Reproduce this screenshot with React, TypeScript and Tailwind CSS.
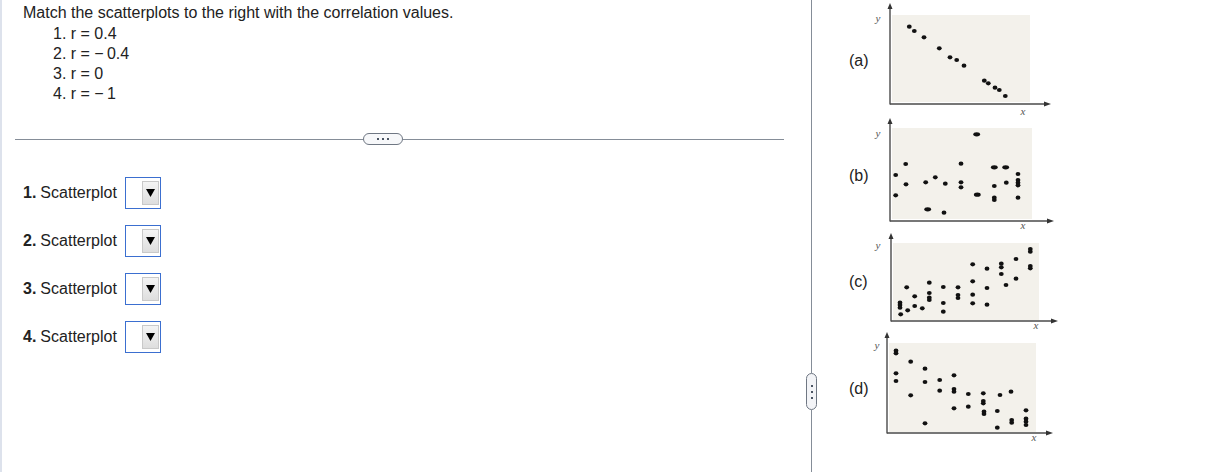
import React from "react";

type Dot = [number, number, number?];

const plotA: Dot[] = [
  [39.3, 26.7], [44.3, 31], [54, 37.3], [69.3, 48.3], [80, 57.3], [86.7, 60], [94, 65.7],
  [114.3, 80.7], [118.3, 83.3], [125, 87.7], [129.3, 90], [135.3, 96],
];

const plotB: Dot[] = [
  [106.7, 19.3, 1], [35.7, 49], [25.7, 60], [36, 69.3], [25.7, 80.3], [55.7, 67.3], [65.3, 62.3],
  [57.7, 94.3, 1], [75.3, 68.7], [74, 97.7], [91, 48.7], [91, 67.3], [91, 72.3], [107.3, 79.7, 1],
  [124.3, 52.3, 1], [135.7, 52.3, 1], [124.3, 71], [124.3, 82.7], [124.3, 85], [136.3, 67.7],
  [148, 59], [148, 65], [148, 67.7], [148, 70.3], [148, 82.7],
];

const plotC: Dot[] = [
  [30, 72.7], [30, 75], [30, 77.7], [30.7, 84.3], [36.7, 57.3], [37.7, 80.3], [44.7, 66.3], [44.7, 76],
  [52.3, 78.3], [59.3, 52.7], [59.3, 63], [59.3, 67.7], [59.3, 70], [73.3, 57], [73.3, 73], [73.3, 81.7],
  [88, 57.3], [88, 65], [88, 68], [102.7, 34.3], [102.7, 51.3], [102.7, 64.7], [102.7, 73.3],
  [117, 38.7], [117, 58], [117, 74.7], [131.3, 33.7], [131.3, 37.3], [131.3, 44], [136, 55],
  [146, 29], [146, 48.7], [160.3, 19], [160.3, 21.7], [160.3, 36], [160.3, 38.3],
];

const plotD: Dot[] = [
  [26, 20.7], [26, 23.3], [40.7, 31.7], [26, 43.3], [26, 51], [40.7, 65.3], [55, 38.7], [55, 52],
  [55, 93.3], [69.7, 50], [69.7, 60.7], [84, 45.3], [84, 59], [84, 61.7], [84, 78.3], [98.3, 64],
  [98.3, 76.7], [113.3, 63.3], [113.3, 71], [113.3, 73.3], [114, 81.7], [114, 84], [127.3, 81],
  [127.3, 97.7], [130, 65], [141, 61.7], [141.7, 90], [141.7, 92.7], [156, 80.3], [156, 88.7],
  [156, 91.7], [156, 95],
];

type PlotSpec = {
  label: string;
  height: number;
  labelTop: string;
  axisX: number;
  axisTop: number;
  axisY: number;
  rect: [number, number, number, number];
  axisEnd: number;
  yLab: [number, number];
  xLab: [number, number];
  dots: Dot[];
};

const plots: PlotSpec[] = [
  { label: "(a)", height: 115, labelTop: "pt-[51px]", axisX: 20, axisTop: 3, axisY: 104, rect: [22, 15, 160, 102], axisEnd: 181, yLab: [8, 22], xLab: [153, 115], dots: plotA },
  { label: "(b)", height: 115, labelTop: "pt-[51px]", axisX: 20, axisTop: 3, axisY: 106, rect: [22, 13, 162, 104], axisEnd: 184, yLab: [8, 22], xLab: [153, 114], dots: plotB },
  { label: "(c)", height: 100, labelTop: "pt-[42px]", axisX: 21, axisTop: 3, axisY: 91, rect: [23, 13, 169, 90], axisEnd: 188, yLab: [8, 19], xLab: [166, 99], dots: plotC },
  { label: "(d)", height: 120, labelTop: "pt-[49px]", axisX: 17, axisTop: 2, axisY: 103, rect: [19, 13, 166, 102], axisEnd: 183, yLab: [7, 19], xLab: [164, 111], dots: plotD },
];

function Plot({ p }: { p: PlotSpec }) {
  const [rx1, ry1, rx2, ry2] = p.rect;
  return (
    <svg width={195} height={p.height} viewBox={`0 0 195 ${p.height}`} className="block overflow-visible">
      <rect x={rx1} y={ry1} width={rx2 - rx1} height={ry2 - ry1} fill="#f3f1eb" />
      <line x1={p.axisX} y1={p.axisTop + 4} x2={p.axisX} y2={p.axisY + 0.5} stroke="#4a4a4a" strokeWidth={1.4} />
      <polygon points={`${p.axisX - 2.5},${p.axisTop + 6} ${p.axisX},${p.axisTop} ${p.axisX + 2.5},${p.axisTop + 6}`} fill="#333" />
      <line x1={p.axisX} y1={p.axisY} x2={p.axisEnd - 5} y2={p.axisY} stroke="#4a4a4a" strokeWidth={1.4} />
      <polygon points={`${p.axisEnd - 7},${p.axisY - 2.5} ${p.axisEnd},${p.axisY} ${p.axisEnd - 7},${p.axisY + 2.5}`} fill="#333" />
      <text x={p.yLab[0]} y={p.yLab[1]} fontSize={11} fontStyle="italic" fontFamily="'Liberation Serif', serif" fill="#555" textAnchor="middle">y</text>
      <text x={p.xLab[0]} y={p.xLab[1]} fontSize={11} fontStyle="italic" fontFamily="'Liberation Serif', serif" fill="#555" textAnchor="middle">x</text>
      {p.dots.map((d, i) => (
        <ellipse key={i} cx={d[0]} cy={d[1]} rx={d[2] ? 3.4 : 2.4} ry={2.1} fill="#111" />
      ))}
    </svg>
  );
}

function Select() {
  return (
    <div className="w-[36px] h-[32px] border border-[#3b6fd0] bg-white flex items-center justify-end pr-px">
      <div className="w-[17px] h-[24px] bg-gradient-to-b from-[#f4f4f4] to-[#dedede] border border-[#c9c9c9] flex items-center justify-center">
        <svg width="9" height="8" viewBox="0 0 9 8">
          <polygon points="0,0 9,0 4.5,8" fill="#000" />
        </svg>
      </div>
    </div>
  );
}

export default function App() {
  const items = [
    "1. r\u00a0=\u00a00.4",
    "2. r\u00a0=\u00a0\u2212\u20090.4",
    "3. r\u00a0=\u00a00",
    "4. r\u00a0=\u00a0\u2212\u20091",
  ];
  return (
    <div className="flex h-[472px] w-[1229px] bg-white text-[#222] font-['Liberation_Sans',Arial,sans-serif] overflow-hidden">
      <div className="w-[806px] shrink-0 border-l-2 border-[#dde2ec] flex flex-col">
        <div className="pl-[21px] pt-[3px] text-[16px] leading-[20px]">
          <div>Match the scatterplots to the right with the correlation values.</div>
          <div className="pl-[30px] mt-px">
            {items.map((t) => (
              <div key={t}>{t}</div>
            ))}
          </div>
        </div>
        <div className="mt-[29px] ml-[13px] w-[769px] flex items-center h-[12px]">
          <div className="flex-1 h-px bg-[#858d98]" />
          <div className="w-[40px] h-[12px] rounded-full border border-[#6f7783] bg-[#f7f8fa] flex items-center justify-center gap-[3px]">
            <span className="w-[2px] h-[2px] bg-[#4b5563]" />
            <span className="w-[2px] h-[2px] bg-[#4b5563]" />
            <span className="w-[2px] h-[2px] bg-[#4b5563]" />
          </div>
          <div className="w-[381px] h-px bg-[#858d98]" />
        </div>
        <div className="mt-[32px] pl-[21px] flex flex-col gap-4 text-[16px]">
          {[1, 2, 3, 4].map((n) => (
            <div key={n} className="flex items-center h-[32px]">
              <span className="font-bold">{n}.</span>
              <span className="ml-[4px] w-[85px]">Scatterplot</span>
              <Select />
            </div>
          ))}
        </div>
      </div>
      <div className="w-[11px] shrink-0 flex flex-col items-center">
        <div className="w-px h-[373px] bg-[#858d98]" />
        <div className="w-[11px] h-[37px] rounded-full border border-[#6f7783] bg-[#f3f4f7] flex flex-col items-center justify-center gap-[4px]">
          <span className="w-[2px] h-[2px] bg-[#4b5563]" />
          <span className="w-[2px] h-[2px] bg-[#4b5563]" />
          <span className="w-[2px] h-[2px] bg-[#4b5563]" />
        </div>
        <div className="w-px flex-1 bg-[#858d98]" />
      </div>
      <div className="pl-[32px] flex flex-col">
        {plots.map((p) => (
          <div key={p.label} className="flex items-start">
            <span className={`w-[21px] text-[16px] leading-[20px] ${p.labelTop}`}>{p.label}</span>
            <Plot p={p} />
          </div>
        ))}
      </div>
    </div>
  );
}
